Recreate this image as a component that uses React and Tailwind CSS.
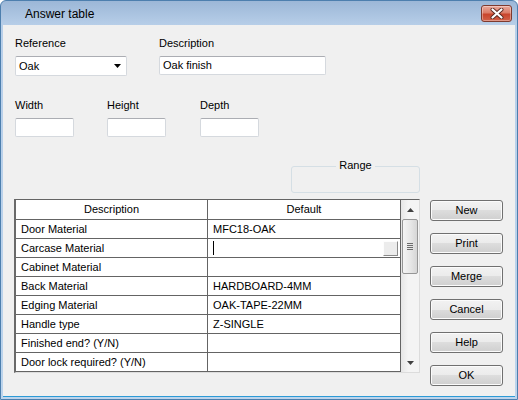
import React from 'react';

const ROWS = [
  ['Door Material', 'MFC18-OAK'],
  ['Carcase Material', null],
  ['Cabinet Material', ''],
  ['Back Material', 'HARDBOARD-4MM'],
  ['Edging Material', 'OAK-TAPE-22MM'],
  ['Handle type', 'Z-SINGLE'],
  ['Finished end? (Y/N)', ''],
  ['Door lock required? (Y/N)', ''],
];

const BUTTONS = ['New', 'Print', 'Merge', 'Cancel', 'Help', 'OK'];

const font = { fontFamily: '"Liberation Sans", Arial, sans-serif' };

function TextBox({ className = '', children }) {
  return (
    <div
      className={`flex items-center rounded-[2px] border border-[#d5d9de] border-t-[#abadb3] bg-white pl-[3px] text-[11px] text-black ${className}`}
    >
      {children}
    </div>
  );
}

function DialogButton({ label }) {
  return (
    <button className="flex h-[21px] w-[73px] items-center justify-center rounded-[3px] border border-[#707070] bg-[linear-gradient(to_bottom,#f2f2f2_0%,#ebebeb_50%,#dddddd_50%,#cfcfcf_100%)] text-[11px] text-black shadow-[inset_0_0_0_1px_#fbfbfb]">
      {label}
    </button>
  );
}

function CloseButton() {
  return (
    <div className="flex h-[17px] w-[31px] items-center justify-center rounded-[3px] border border-[#7e3a2e] bg-[linear-gradient(to_bottom,#e9a99b_0%,#dc7d68_45%,#c9452c_55%,#d2624a_100%)] shadow-[inset_0_0_0_1px_rgba(255,255,255,0.35)]">
      <svg width="14" height="11" viewBox="0 0 14 11">
        <path d="M2.5 1.5 L11.5 9.5 M11.5 1.5 L2.5 9.5" stroke="#5a2a22" strokeWidth="4" strokeLinecap="round" />
        <path d="M2.5 1.5 L11.5 9.5 M11.5 1.5 L2.5 9.5" stroke="#ffffff" strokeWidth="2.2" strokeLinecap="round" />
      </svg>
    </div>
  );
}

function ScrollBar() {
  return (
    <div className="flex w-[18px] flex-col bg-[linear-gradient(to_right,#e6e6e6,#f4f4f4_40%,#f4f4f4)]">
      <div className="flex h-[19px] items-center justify-center">
        <svg width="7" height="4" viewBox="0 0 7 4">
          <path d="M3.5 0 L7 4 L0 4 Z" fill="#404040" />
        </svg>
      </div>
      <div className="mx-[1px] flex h-[55px] items-center justify-center rounded-[2px] border border-[#969696] bg-[linear-gradient(to_right,#f4f4f4,#e8e8e8_50%,#d6d6d6)]">
        <div className="flex flex-col gap-[1px]">
          <div className="h-[1px] w-[6px] bg-[#6c6c6c]" />
          <div className="h-[1px] w-[6px] bg-[#6c6c6c]" />
          <div className="h-[1px] w-[6px] bg-[#6c6c6c]" />
          <div className="h-[1px] w-[6px] bg-[#6c6c6c]" />
        </div>
      </div>
      <div className="flex-1" />
      <div className="flex h-[19px] items-center justify-center">
        <svg width="7" height="4" viewBox="0 0 7 4">
          <path d="M0 0 L7 0 L3.5 4 Z" fill="#404040" />
        </svg>
      </div>
    </div>
  );
}

function AnswerGrid() {
  return (
    <div className="flex border-t border-l-2 border-r border-b border-t-[#646464] border-l-[#6a6a6a] border-r-[#dcdcdc] border-b-[#dcdcdc]">
      <div className="w-[385px] bg-white">
        <div className="grid h-[20px] grid-cols-[192px_193px] border-b border-[#646464] text-[11px] leading-[19px]">
          <div className="border-r border-[#646464] text-center">Description</div>
          <div className="border-r border-[#646464] text-center">Default</div>
        </div>
        {ROWS.map(([desc, def]) => (
          <div
            key={desc}
            className="grid h-[19px] grid-cols-[192px_193px] border-b border-[#646464] text-[11px] leading-[18px]"
          >
            <div className="truncate border-r border-[#646464] pl-[5px]">{desc}</div>
            <div className="flex items-center border-r border-[#646464] pl-[5px]">
              {def === null ? (
                <>
                  <div className="h-[14px] w-[1px] bg-black" />
                  <div className="flex-1" />
                  <div className="mr-[2px] h-[15px] w-[15px] border border-[#fdfdfd] border-r-[#8a8a8a] border-b-[#8a8a8a] bg-[#ececec]" />
                </>
              ) : (
                def
              )}
            </div>
          </div>
        ))}
      </div>
      <ScrollBar />
    </div>
  );
}

export default function App() {
  return (
    <div
      className="flex h-[400px] w-[518px] flex-col overflow-hidden rounded-t-[6px] border border-[#4d7fae] bg-[linear-gradient(to_bottom,#9cb7d7_0px,#b8cfe9_25px,#bcd4ec_100%)] text-black"
      style={font}
    >
      {/* title bar */}
      <div className="flex h-[24px] items-start">
        <div className="pl-[24px] pt-[6px] text-[12px] leading-[14px] text-black">Answer table</div>
        <div className="flex-1" />
        <div className="mr-[5px] mt-[4px]">
          <CloseButton />
        </div>
      </div>

      {/* client area */}
      <div className="mx-[2px] mb-[2px] flex-1 border-b border-[#2c9ad6] bg-[#f0f0f0]">
        <div className="ml-[12px] mt-[12px] flex">
          <div className="w-[144px]">
            <div className="h-[13px] text-[11px] leading-[13px]">Reference</div>
            <TextBox className="mt-[6px] h-[20px] w-[112px]">
              <span className="flex-1">Oak</span>
              <svg className="mr-[5px]" width="7" height="4" viewBox="0 0 7 4">
                <path d="M0 0 L7 0 L3.5 4 Z" fill="#000" />
              </svg>
            </TextBox>
          </div>
          <div>
            <div className="h-[13px] text-[11px] leading-[13px]">Description</div>
            <TextBox className="mt-[6px] h-[19px] w-[167px]">Oak finish</TextBox>
          </div>
        </div>

        <div className="ml-[12px] mt-[23px] flex">
          {['Width', 'Height', 'Depth'].map((l, i) => (
            <div key={l} className={i === 0 ? 'w-[92px]' : i === 1 ? 'w-[93px]' : ''}>
              <div className="h-[13px] text-[11px] leading-[13px]">{l}</div>
              <TextBox className="mt-[6px] h-[19px] w-[59px]" />
            </div>
          ))}
        </div>

        <div className="ml-[288px] mt-[29px] flex h-[27px] w-[129px] justify-center rounded-[3px] border border-[#d5dfe5]">
          <span className="-mt-[8px] h-[13px] bg-[#f0f0f0] px-[3px] text-[11px] leading-[13px]">Range</span>
        </div>

        <div className="ml-[11px] mt-[6px] flex items-start">
          <AnswerGrid />
          <div className="ml-[10px] mt-[1px] flex flex-col gap-[12px]">
            {BUTTONS.map((b) => (
              <DialogButton key={b} label={b} />
            ))}
          </div>
        </div>
      </div>
    </div>
  );
}
